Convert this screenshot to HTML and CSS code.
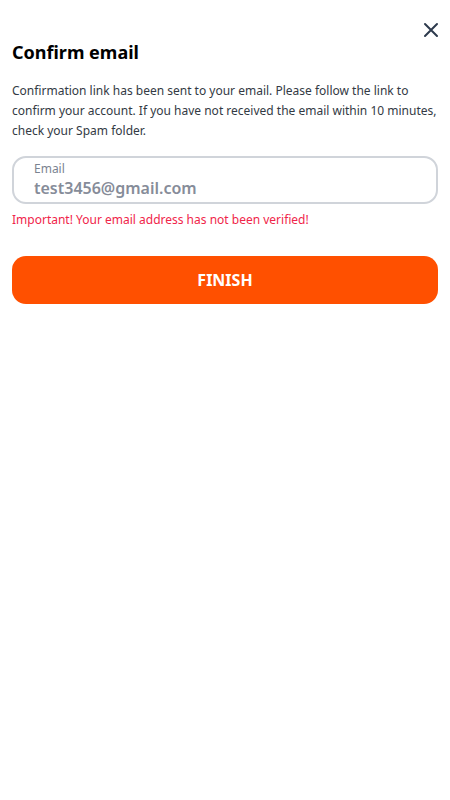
FILE: index.html
```html
<!DOCTYPE html>
<html lang="en">
<head>
  <meta charset="UTF-8" />
  <meta name="viewport" content="width=device-width, initial-scale=1" />
  <title>Confirm email</title>
  <link rel="stylesheet" href="styles.css">
</head>
<body>
  <div class="modal">
    <div class="modal-top">
      <button class="close-btn" aria-label="Close">
        <svg width="18" height="18" viewBox="0 0 18 18" fill="none">
          <path d="M3 3L15 15M15 3L3 15" stroke="#2d3a4d" stroke-width="2" stroke-linecap="round"/>
        </svg>
      </button>
    </div>
    <h2>Confirm email</h2>
    <p class="info">Confirmation link has been sent to your email. Please follow the link to confirm your account. If you have not received the email within 10 minutes, check your Spam folder.</p>
    <div class="field">
      <label for="email">Email</label>
      <input type="email" id="email" value="test3456@gmail.com" readonly />
    </div>
    <div class="error">Important! Your email address has not been verified!</div>
    <button class="finish-btn">FINISH</button>
  </div>
</body>
</html>
```

FILE: styles.css
```css
body {
  font-family: 'Noto Sans', 'Open Sans', sans-serif;
  margin: 0;
  background: #fff;
  color: #000;
}

.modal {
  padding: 0 12px;
}

.modal-top {
  display: flex;
  justify-content: flex-end;
  padding-top: 21px;
  height: 18px;
}

.close-btn {
  background: none;
  border: none;
  padding: 0;
  margin-right: -2px;
  cursor: pointer;
  line-height: 0;
}

h2 {
  margin: 0;
  font-size: 18px;
  font-weight: 700;
  line-height: 26px;
}

.info {
  margin: 16px 0 0;
  font-size: 12px;
  line-height: 20px;
  color: #333a44;
}

.field {
  margin-top: 15px;
  border: 2px solid #d0d4da;
  border-radius: 14px;
  padding: 3px 20px;
  display: flex;
  flex-direction: column;
}

.field label {
  font-size: 12px;
  line-height: 16px;
  color: #7b8391;
}

.field input {
  border: none;
  outline: none;
  padding: 0;
  font-family: inherit;
  font-size: 16px;
  font-weight: 600;
  line-height: 22px;
  color: #868c99;
  background: transparent;
}

.error {
  margin-top: 7px;
  font-size: 12px;
  line-height: 18px;
  color: #f0254a;
}

.finish-btn {
  margin-top: 27px;
  width: 100%;
  height: 48px;
  border: none;
  border-radius: 14px;
  background: #ff5000;
  color: #fff;
  font-family: inherit;
  font-size: 16px;
  font-weight: 700;
  cursor: pointer;
}
```
